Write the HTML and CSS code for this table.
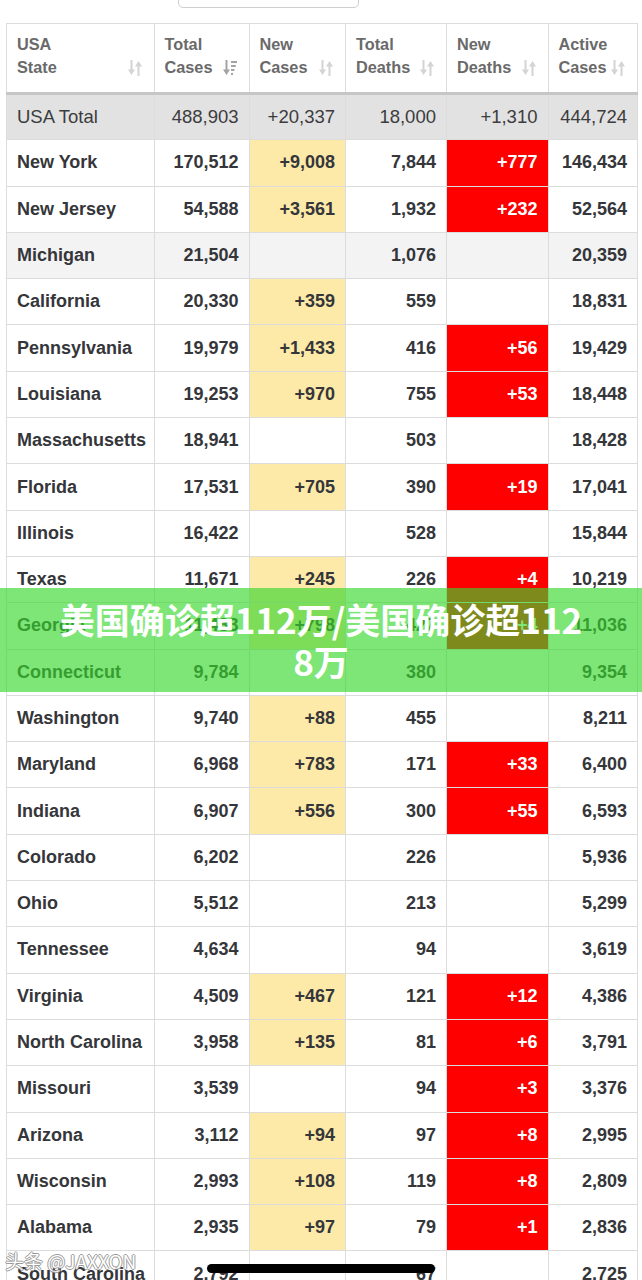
FILE: index.html
```html
<!DOCTYPE html>
<html lang="en">
<head>
<meta charset="utf-8">
<title>USA Cases</title>
<link rel="stylesheet" href="styles.css">
</head>
<body>
<div class="search"></div>
<div class="wrap">
<table class="stats">
<colgroup>
<col class="c1"><col class="c2"><col class="c3"><col class="c4"><col class="c5"><col class="c6">
</colgroup>
<thead>
<tr class="head">
<th><div class="hcell"><span>USA<br>State</span><svg class="sort" width="16" height="18" viewBox="0 0 16 18"><path d="M3.5 1h2v10H3.5z M1 10.5h7l-3.5 5.5z M10.5 17h2V7h-2z M8 7.5h7l-3.5-5.5z" fill="#d4d4d4"/></svg></div></th>
<th><div class="hcell"><span>Total<br>Cases</span><svg class="sort" width="16" height="18" viewBox="0 0 16 18"><path d="M3.5 1h2v10H3.5z M1 10.5h7l-3.5 5.5z M9 2h6v2H9z M9 6h4.8v2H9z M9 10h3.4v2H9z M9 14h2v2H9z" fill="#a3a3a3"/></svg></div></th>
<th><div class="hcell"><span>New<br>Cases</span><svg class="sort" width="16" height="18" viewBox="0 0 16 18"><path d="M3.5 1h2v10H3.5z M1 10.5h7l-3.5 5.5z M10.5 17h2V7h-2z M8 7.5h7l-3.5-5.5z" fill="#d4d4d4"/></svg></div></th>
<th><div class="hcell"><span>Total<br>Deaths</span><svg class="sort" width="16" height="18" viewBox="0 0 16 18"><path d="M3.5 1h2v10H3.5z M1 10.5h7l-3.5 5.5z M10.5 17h2V7h-2z M8 7.5h7l-3.5-5.5z" fill="#d4d4d4"/></svg></div></th>
<th><div class="hcell"><span>New<br>Deaths</span><svg class="sort" width="16" height="18" viewBox="0 0 16 18"><path d="M3.5 1h2v10H3.5z M1 10.5h7l-3.5 5.5z M10.5 17h2V7h-2z M8 7.5h7l-3.5-5.5z" fill="#d4d4d4"/></svg></div></th>
<th><div class="hcell"><span>Active<br>Cases</span><svg class="sort" width="16" height="18" viewBox="0 0 16 18"><path d="M3.5 1h2v10H3.5z M1 10.5h7l-3.5 5.5z M10.5 17h2V7h-2z M8 7.5h7l-3.5-5.5z" fill="#d4d4d4"/></svg></div></th>
</tr>
</thead>
<tbody>
<tr class="total"><td>USA Total</td><td class="n">488,903</td><td class="n">+20,337</td><td class="n">18,000</td><td class="n">+1,310</td><td class="n">444,724</td></tr>
<tr><td>New York</td><td class="n">170,512</td><td class="n new">+9,008</td><td class="n">7,844</td><td class="n dead">+777</td><td class="n">146,434</td></tr>
<tr><td>New Jersey</td><td class="n">54,588</td><td class="n new">+3,561</td><td class="n">1,932</td><td class="n dead">+232</td><td class="n">52,564</td></tr>
<tr class="grey"><td>Michigan</td><td class="n">21,504</td><td class="n"></td><td class="n">1,076</td><td class="n"></td><td class="n">20,359</td></tr>
<tr><td>California</td><td class="n">20,330</td><td class="n new">+359</td><td class="n">559</td><td class="n"></td><td class="n">18,831</td></tr>
<tr><td>Pennsylvania</td><td class="n">19,979</td><td class="n new">+1,433</td><td class="n">416</td><td class="n dead">+56</td><td class="n">19,429</td></tr>
<tr><td>Louisiana</td><td class="n">19,253</td><td class="n new">+970</td><td class="n">755</td><td class="n dead">+53</td><td class="n">18,448</td></tr>
<tr><td>Massachusetts</td><td class="n">18,941</td><td class="n"></td><td class="n">503</td><td class="n"></td><td class="n">18,428</td></tr>
<tr><td>Florida</td><td class="n">17,531</td><td class="n new">+705</td><td class="n">390</td><td class="n dead">+19</td><td class="n">17,041</td></tr>
<tr><td>Illinois</td><td class="n">16,422</td><td class="n"></td><td class="n">528</td><td class="n"></td><td class="n">15,844</td></tr>
<tr><td>Texas</td><td class="n">11,671</td><td class="n new">+245</td><td class="n">226</td><td class="n dead">+4</td><td class="n">10,219</td></tr>
<tr><td>Georgia</td><td class="n">11,483</td><td class="n new">+798</td><td class="n">427</td><td class="n dead">+4</td><td class="n">11,036</td></tr>
<tr><td>Connecticut</td><td class="n">9,784</td><td class="n"></td><td class="n">380</td><td class="n"></td><td class="n">9,354</td></tr>
<tr><td>Washington</td><td class="n">9,740</td><td class="n new">+88</td><td class="n">455</td><td class="n"></td><td class="n">8,211</td></tr>
<tr><td>Maryland</td><td class="n">6,968</td><td class="n new">+783</td><td class="n">171</td><td class="n dead">+33</td><td class="n">6,400</td></tr>
<tr><td>Indiana</td><td class="n">6,907</td><td class="n new">+556</td><td class="n">300</td><td class="n dead">+55</td><td class="n">6,593</td></tr>
<tr><td>Colorado</td><td class="n">6,202</td><td class="n"></td><td class="n">226</td><td class="n"></td><td class="n">5,936</td></tr>
<tr><td>Ohio</td><td class="n">5,512</td><td class="n"></td><td class="n">213</td><td class="n"></td><td class="n">5,299</td></tr>
<tr><td>Tennessee</td><td class="n">4,634</td><td class="n"></td><td class="n">94</td><td class="n"></td><td class="n">3,619</td></tr>
<tr><td>Virginia</td><td class="n">4,509</td><td class="n new">+467</td><td class="n">121</td><td class="n dead">+12</td><td class="n">4,386</td></tr>
<tr><td>North Carolina</td><td class="n">3,958</td><td class="n new">+135</td><td class="n">81</td><td class="n dead">+6</td><td class="n">3,791</td></tr>
<tr><td>Missouri</td><td class="n">3,539</td><td class="n"></td><td class="n">94</td><td class="n dead">+3</td><td class="n">3,376</td></tr>
<tr><td>Arizona</td><td class="n">3,112</td><td class="n new">+94</td><td class="n">97</td><td class="n dead">+8</td><td class="n">2,995</td></tr>
<tr><td>Wisconsin</td><td class="n">2,993</td><td class="n new">+108</td><td class="n">119</td><td class="n dead">+8</td><td class="n">2,809</td></tr>
<tr><td>Alabama</td><td class="n">2,935</td><td class="n new">+97</td><td class="n">79</td><td class="n dead">+1</td><td class="n">2,836</td></tr>
<tr><td>South Carolina</td><td class="n">2,792</td><td class="n"></td><td class="n">67</td><td class="n"></td><td class="n">2,725</td></tr>
</tbody>
</table>
</div>
<div class="banner"><p class="banner-text">美国确诊超112万/美国确诊超112<br>8万</p></div>
<div class="mark">头条 @JAXXON</div>
<div class="homebar"></div>
</body>
</html>
```
FILE: styles.css
```css
html, body {
  margin: 0;
  padding: 0;
}
body {
  width: 642px;
  height: 1280px;
  overflow: hidden;
  position: relative;
  background: #fff;
  font-family: "Liberation Sans", Arial, Helvetica, sans-serif;
  color: #35363a;
}
.search {
  width: 179px;
  height: 19px;
  margin: -13px 0 0 178px;
  border: 1px solid #cfcfcf;
  border-radius: 5px;
}
.wrap {
  padding: 15px 0 0 6px;
}
.stats {
  border-collapse: collapse;
  table-layout: fixed;
  width: 631px;
}
.c1 { width: 147.5px; }
.c2 { width: 95px; }
.c3 { width: 96.5px; }
.c4 { width: 101px; }
.c5 { width: 101.5px; }
.c6 { width: 89.5px; }
.stats th,
.stats td {
  border: 1px solid #dcdcdc;
}
.head {
  height: 70px;
}
.stats th {
  vertical-align: top;
  text-align: left;
  padding: 9px 10px 0 10px;
  font-size: 16.3px;
  line-height: 23px;
  font-weight: bold;
  color: #6a6a6a;
  border-bottom: 3px solid #c6c6c6;
}
.hcell {
  display: flex;
  justify-content: space-between;
  align-items: flex-end;
}
.sort {
  flex: none;
  margin-bottom: 2px;
  margin-right: 1px;
}
.stats tbody tr {
  height: 46.3px;
}
.stats td {
  padding: 0 10px;
  font-size: 18px;
  font-weight: bold;
  white-space: nowrap;
  overflow: hidden;
}
.stats td.n {
  text-align: right;
}
.stats tr.total td {
  background: #e2e2e2;
  font-weight: normal;
  color: #3c3c3e;
  font-size: 18.5px;
}
.stats tr.grey td {
  background: #f3f3f3;
}
.stats td.new {
  background: #fde9a8;
}
.stats td.dead {
  background: #fe0000;
  color: #fff;
}
.banner {
  position: absolute;
  left: 0;
  right: 0;
  top: 588px;
  height: 104px;
  box-sizing: border-box;
  background: rgba(55, 215, 44, 0.645);
  display: flex;
  align-items: center;
  justify-content: center;
}
.banner-text {
  margin: 0;
  text-align: center;
  color: #fff;
  font-family: "Noto Sans CJK SC", "Noto Sans", sans-serif;
  font-weight: 700;
  font-size: 35px;
  line-height: 42px;
}
.mark {
  position: absolute;
  left: 5px;
  top: 1250px;
  font-family: "Noto Sans CJK SC", "Liberation Sans", sans-serif;
  font-size: 19px;
  line-height: 22px;
  color: #fff;
  text-shadow: -1px 0 #8a8a8a, 1px 0 #8a8a8a, 0 -1px #8a8a8a, 0 1px #8a8a8a;
  opacity: 0.85;
}
.homebar {
  position: absolute;
  left: 207px;
  top: 1264px;
  width: 228px;
  height: 9px;
  border-radius: 5px;
  background: #000;
}
```
